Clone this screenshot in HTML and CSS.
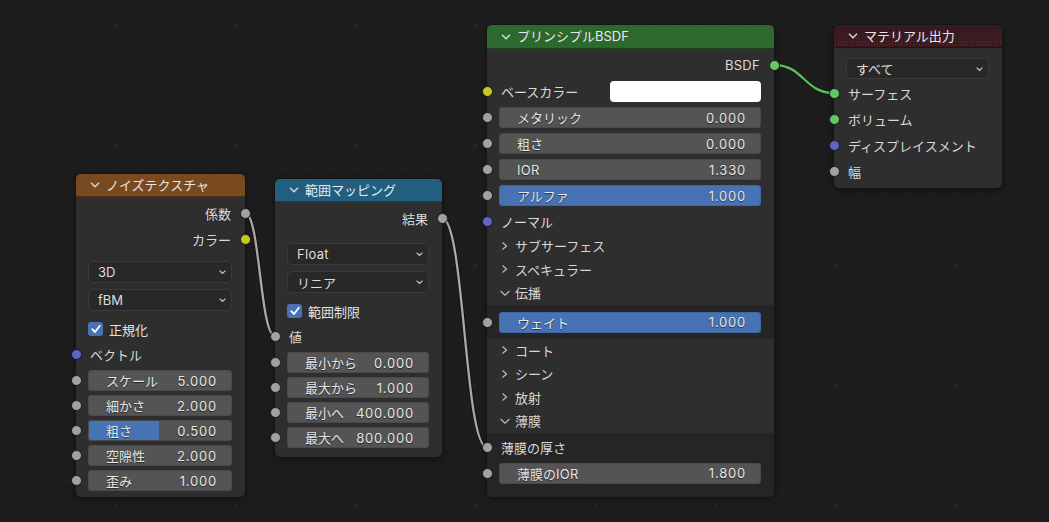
FILE: index.html
```html
<!DOCTYPE html>
<html lang="ja">
<head>
<meta charset="utf-8">
<title>Shader Nodes</title>
<link rel="stylesheet" href="styles.css">
</head>
<body>
<div class="canvas">
  <svg class="wires" width="1049" height="522" viewBox="0 0 1049 522">
    <g fill="none" stroke-linecap="round">
      <path class="wb" d="M245,213 C260,213 260,336 275,336"/>
      <path class="wg" d="M245,213 C260,213 260,336 275,336"/>
      <path class="wb" d="M442,218 C464.5,218 464.5,447.5 487,447.5"/>
      <path class="wg" d="M442,218 C464.5,218 464.5,447.5 487,447.5"/>
      <path class="wb" d="M774,65 C804,65 804,93 834,93"/>
      <path class="wgreen" d="M774,65 C804,65 804,93 834,93"/>
    </g>
  </svg>

  <!-- Noise texture -->
  <div class="node n1">
    <div class="hdr tex">
      <svg class="hchev" width="10" height="6" viewBox="0 0 10 6"><polyline points="1,0.8 5,4.8 9,0.8"/></svg>
      <span>ノイズテクスチャ</span>
    </div>
    <div class="row out h26 mt3"><span>係数</span><i class="sk r grey"></i></div>
    <div class="row out h26"><span>カラー</span><i class="sk r yel"></i></div>
    <div class="row h22 mt9"><div class="dd"><span>3D</span><svg class="dchev" width="7" height="4" viewBox="0 0 7 4"><polyline points="0.6,0.6 3.5,3.4 6.4,0.6"/></svg></div></div>
    <div class="row h22 mt6"><div class="dd"><span>fBM</span><svg class="dchev" width="7" height="4" viewBox="0 0 7 4"><polyline points="0.6,0.6 3.5,3.4 6.4,0.6"/></svg></div></div>
    <div class="row h22 mt7 chk"><span class="cb"><svg width="14" height="14" viewBox="0 0 14 14"><polyline points="3.2,7.2 6,10 10.8,3.8"/></svg></span><span>正規化</span></div>
    <div class="row in h26 mt1"><i class="sk l vec"></i><span>ベクトル</span></div>
    <div class="row h21 mt3"><i class="sk l grey"></i><div class="fld"><span>スケール</span><span class="v">5.000</span></div></div>
    <div class="row h21 mt4"><i class="sk l grey"></i><div class="fld"><span>細かさ</span><span class="v">2.000</span></div></div>
    <div class="row h21 mt4"><i class="sk l grey"></i><div class="fld half"><span>粗さ</span><span class="v">0.500</span></div></div>
    <div class="row h21 mt4"><i class="sk l grey"></i><div class="fld"><span>空隙性</span><span class="v">2.000</span></div></div>
    <div class="row h21 mt4"><i class="sk l grey"></i><div class="fld"><span>歪み</span><span class="v">1.000</span></div></div>
  </div>

  <!-- Map range -->
  <div class="node n2">
    <div class="hdr conv">
      <svg class="hchev" width="10" height="6" viewBox="0 0 10 6"><polyline points="1,0.8 5,4.8 9,0.8"/></svg>
      <span>範囲マッピング</span>
    </div>
    <div class="row out h26 mt3"><span>結果</span><i class="sk r grey"></i></div>
    <div class="row h22 mt12"><div class="dd"><span class="lat">Float</span><svg class="dchev" width="7" height="4" viewBox="0 0 7 4"><polyline points="0.6,0.6 3.5,3.4 6.4,0.6"/></svg></div></div>
    <div class="row h22 mt6"><div class="dd"><span>リニア</span><svg class="dchev" width="7" height="4" viewBox="0 0 7 4"><polyline points="0.6,0.6 3.5,3.4 6.4,0.6"/></svg></div></div>
    <div class="row h22 mt7 chk"><span class="cb"><svg width="14" height="14" viewBox="0 0 14 14"><polyline points="3.2,7.2 6,10 10.8,3.8"/></svg></span><span>範囲制限</span></div>
    <div class="row in h26 mt1"><i class="sk l grey"></i><span>値</span></div>
    <div class="row h21 mt3"><i class="sk l grey"></i><div class="fld"><span>最小から</span><span class="v">0.000</span></div></div>
    <div class="row h21 mt4"><i class="sk l grey"></i><div class="fld"><span>最大から</span><span class="v">1.000</span></div></div>
    <div class="row h21 mt4"><i class="sk l grey"></i><div class="fld"><span>最小へ</span><span class="v">400.000</span></div></div>
    <div class="row h21 mt4"><i class="sk l grey"></i><div class="fld"><span>最大へ</span><span class="v">800.000</span></div></div>
  </div>

  <!-- Principled BSDF -->
  <div class="node n3">
    <div class="hdr shader h24">
      <svg class="hchev" width="10" height="6" viewBox="0 0 10 6"><polyline points="1,0.8 5,4.8 9,0.8"/></svg>
      <span>プリンシプルBSDF</span>
    </div>
    <div class="row out h26 mt3"><span class="lat">BSDF</span><i class="sk r green"></i></div>
    <div class="row in h26"><i class="sk l yel"></i><span>ベースカラー</span><div class="sw"></div></div>
    <div class="row h21 mt3"><i class="sk l grey"></i><div class="fld"><span>メタリック</span><span class="v">0.000</span></div></div>
    <div class="row h21 mt5"><i class="sk l grey"></i><div class="fld"><span>粗さ</span><span class="v">0.000</span></div></div>
    <div class="row h21 mt5"><i class="sk l grey"></i><div class="fld"><span class="lat">IOR</span><span class="v">1.330</span></div></div>
    <div class="row h21 mt5"><i class="sk l grey"></i><div class="fld blue"><span>アルファ</span><span class="v">1.000</span></div></div>
    <div class="row in h26 mt2"><i class="sk l vec"></i><span>ノーマル</span></div>
    <div class="row ph"><svg class="pchev" width="12" height="10" viewBox="0 0 12 10"><polyline points="3.5,1.5 7.5,5 3.5,8.5"/></svg><span>サブサーフェス</span></div>
    <div class="row ph"><svg class="pchev" width="12" height="10" viewBox="0 0 12 10"><polyline points="3.5,1.5 7.5,5 3.5,8.5"/></svg><span>スペキュラー</span></div>
    <div class="row ph"><svg class="pchev" width="12" height="10" viewBox="0 0 12 10"><polyline points="1.5,3 6,7.2 10.5,3"/></svg><span>伝播</span></div>
    <div class="pnl p1">
      <div class="row h21"><i class="sk l grey"></i><div class="fld blue"><span>ウェイト</span><span class="v">1.000</span></div></div>
    </div>
    <div class="row ph"><svg class="pchev" width="12" height="10" viewBox="0 0 12 10"><polyline points="3.5,1.5 7.5,5 3.5,8.5"/></svg><span>コート</span></div>
    <div class="row ph"><svg class="pchev" width="12" height="10" viewBox="0 0 12 10"><polyline points="3.5,1.5 7.5,5 3.5,8.5"/></svg><span>シーン</span></div>
    <div class="row ph"><svg class="pchev" width="12" height="10" viewBox="0 0 12 10"><polyline points="3.5,1.5 7.5,5 3.5,8.5"/></svg><span>放射</span></div>
    <div class="row ph"><svg class="pchev" width="12" height="10" viewBox="0 0 12 10"><polyline points="1.5,3 6,7.2 10.5,3"/></svg><span>薄膜</span></div>
    <div class="pnl p2">
      <div class="row in h26"><i class="sk l grey"></i><span>薄膜の厚さ</span></div>
      <div class="row h21 mt2"><i class="sk l grey"></i><div class="fld"><span>薄膜の<span class="lat">IOR</span></span><span class="v">1.800</span></div></div>
    </div>
  </div>

  <!-- Material output -->
  <div class="node n4">
    <div class="hdr outp">
      <svg class="hchev" width="10" height="6" viewBox="0 0 10 6"><polyline points="1,0.8 5,4.8 9,0.8"/></svg>
      <span>マテリアル出力</span>
    </div>
    <div class="row h21 mt10"><div class="dd"><span>すべて</span><svg class="dchev" width="7" height="4" viewBox="0 0 7 4"><polyline points="0.6,0.6 3.5,3.4 6.4,0.6"/></svg></div></div>
    <div class="row in h26 mt1"><i class="sk l green"></i><span>サーフェス</span></div>
    <div class="row in h26"><i class="sk l green"></i><span>ボリューム</span></div>
    <div class="row in h26"><i class="sk l vec"></i><span>ディスプレイスメント</span></div>
    <div class="row in h26"><i class="sk l grey"></i><span>幅</span></div>
  </div>
</div>
</body>
</html>
```

FILE: styles.css
```css
* { box-sizing: border-box; }

html, body {
  margin: 0;
  padding: 0;
}

body {
  width: 1049px;
  height: 522px;
  overflow: hidden;
  background-color: #1d1d1d;
  background-image:
    radial-gradient(circle at center, #2c2c2c 0 1px, transparent 1.6px),
    radial-gradient(circle at center, #232323 0 0.7px, transparent 1.2px);
  background-size: 120px 120px, 24px 24px;
  background-position: 55px -35px, 7.5px -10.7px;
  font-family: Inter, "Noto Sans CJK JP", sans-serif;
  font-size: 13px;
  color: #dadada;
}

.canvas {
  position: relative;
  width: 1049px;
  height: 522px;
}

.wires {
  position: absolute;
  left: 0;
  top: 0;
  z-index: 0;
}
.wb { stroke: #151515; stroke-width: 4.4; }
.wg { stroke: #a9a9a9; stroke-width: 2.3; }
.wgreen { stroke: #56c056; stroke-width: 2.3; }

/* ---------- nodes ---------- */
.node {
  position: absolute;
  z-index: 1;
  display: flex;
  flex-direction: column;
  background: #2e2e2e;
  border-radius: 5px;
  box-shadow: 0 0 0 1px #151515, 0 2px 9px rgba(0, 0, 0, 0.45);
}
.n1 { left: 76px;  top: 174px; width: 169px; padding-bottom: 6px; }
.n2 { left: 275px; top: 179px; width: 167px; padding-bottom: 9px; }
.n3 { left: 487px; top: 25px;  width: 287px; }
.n4 { left: 834px; top: 25px;  width: 168px; padding-bottom: 4px; }

.hdr {
  position: relative;
  flex: none;
  height: 23px;
  display: flex;
  align-items: center;
  gap: 6px;
  padding-left: 14px;
  color: #e8e8e8;
  border-radius: 5px 5px 0 0;
  border-bottom: 1px solid rgba(0, 0, 0, 0.35);
}
.hdr.h24 { height: 24px; }
.hdr span { line-height: 1; }
.hchev polyline { fill: none; stroke: #dcdcdc; stroke-width: 1.3; }

.tex { background: #794a1f; }
.conv { background: #215f80; }
.shader {
  background-color: #2d6a2d;
  background-image: radial-gradient(circle, rgba(0, 0, 0, 0.14) 0 0.6px, transparent 0.9px);
  background-size: 3px 3px;
}
.outp {
  background-color: #3a1a21;
  background-image:
    linear-gradient(180deg, #3a1a21 0 40%, rgba(58, 26, 33, 0) 75%),
    radial-gradient(circle, rgba(140, 62, 45, 0.55) 0 0.6px, transparent 0.9px);
  background-size: 100% 100%, 3px 3px;
}

/* ---------- rows ---------- */
.row {
  position: relative;
  flex: none;
  display: flex;
  align-items: center;
  padding: 0 13px 0 12px;
}
.h21 { height: 21px; }
.h22 { height: 22px; }
.h26 { height: 26px; }
.mt1 { margin-top: 1px; }
.mt2 { margin-top: 2px; }
.mt3 { margin-top: 3px; }
.mt4 { margin-top: 4px; }
.mt5 { margin-top: 5px; }
.mt6 { margin-top: 6px; }
.mt7 { margin-top: 7px; }
.mt9 { margin-top: 9px; }
.mt10 { margin-top: 10px; }
.mt12 { margin-top: 12px; }

.out { justify-content: flex-end; }
.out span { margin-right: 1px; }
.in span { margin-left: 2px; }

.lat { letter-spacing: 0.3px; }

/* sockets */
.sk {
  position: absolute;
  top: 50%;
  width: 11px;
  height: 11px;
  margin-top: -5.5px;
  border-radius: 50%;
  border: 1px solid #181818;
}
.sk.l { left: -5.5px; }
.sk.r { right: -5.5px; }
.grey { background: #a1a1a1; }
.yel { background: #c7c729; }
.vec { background: #6363c7; }
.green { background: #63c763; }

/* number fields */
.fld {
  flex: 1;
  height: 100%;
  display: flex;
  align-items: center;
  justify-content: space-between;
  padding: 0 15px 0 18px;
  border-radius: 4px;
  background: #545454;
  box-shadow: inset 0 0 0 1px #4a4a4a;
  color: #e6e6e6;
  text-shadow: 0 1px 1px rgba(0, 0, 0, 0.55);
  white-space: nowrap;
}
.fld .v { letter-spacing: 0.8px; }
.fld.blue {
  background: #4772b3;
  box-shadow: inset 0 0 0 1px #3f67a3;
}
.fld.half {
  background: linear-gradient(90deg, #4772b3 0 49.5%, #545454 49.5% 100%);
}

/* dropdowns */
.dd {
  flex: 1;
  height: 100%;
  display: flex;
  align-items: center;
  justify-content: space-between;
  padding: 0 5px 0 9px;
  background: #282828;
  border: 1px solid #3a3a3a;
  border-radius: 5px;
  color: #dcdcdc;
}
.dchev polyline { fill: none; stroke: #c8c8c8; stroke-width: 1.2; }

/* checkbox */
.chk { gap: 6px; }
.chk span:last-child { color: #e2e2e2; }
.cb {
  width: 15px;
  height: 14px;
  border-radius: 3px;
  background: #4772b3;
  display: flex;
  align-items: center;
  justify-content: center;
}
.cb polyline { fill: none; stroke: #ffffff; stroke-width: 1.8; stroke-linecap: round; stroke-linejoin: round; }

/* color swatch */
.sw {
  margin-left: auto;
  width: 151px;
  height: 21px;
  background: #ffffff;
  border-radius: 4px;
}

/* panels */
.ph {
  height: 23.5px;
  gap: 4px;
  color: #d6d6d6;
}
.pchev polyline { fill: none; stroke: #bdbdbd; stroke-width: 1.2; }

.pnl {
  flex: none;
  display: flex;
  flex-direction: column;
  background: #252525;
}
.pnl.p1 { padding: 7px 0 6px; }
.pnl.p2 {
  padding: 2px 0 13.5px;
  border-radius: 0 0 5px 5px;
}
```
